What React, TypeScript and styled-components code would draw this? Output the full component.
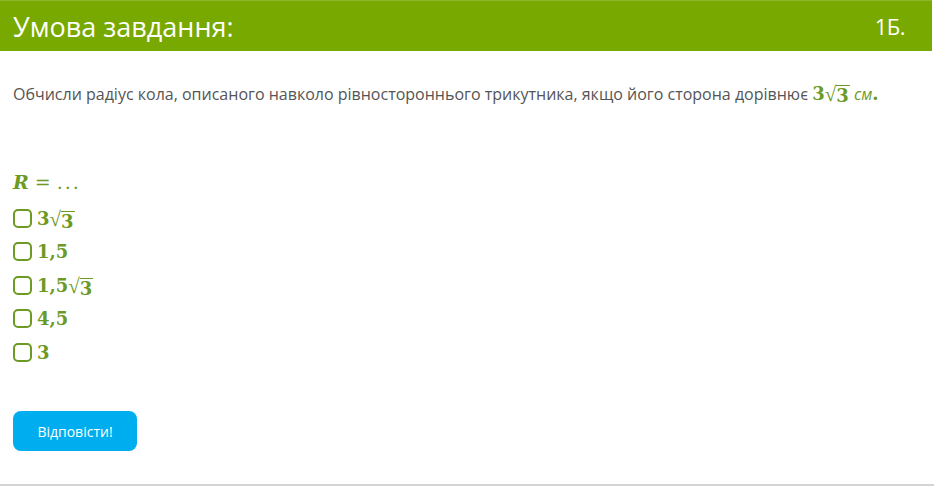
import React from 'react';
import styled, { createGlobalStyle } from 'styled-components';

const GlobalStyle = createGlobalStyle`
  html, body {
    margin: 0;
    padding: 0;
    background: #ffffff;
  }
  body {
    font-family: 'Open Sans', 'Noto Sans', sans-serif;
  }
`;

const Page = styled.div`
  width: 934px;
  height: 487px;
  display: flex;
  flex-direction: column;
  box-sizing: border-box;
`;

const Header = styled.div`
  height: 51px;
  margin-right: 2px;
  background: #78a900;
  border-top: 1px solid #8cb52a;
  box-sizing: border-box;
  display: flex;
  align-items: center;
  justify-content: space-between;
  padding: 0 27px 0 13px;
  color: #ffffff;
`;

const Title = styled.div`
  font-size: 27px;
  font-weight: 400;
  letter-spacing: 0;
`;

const Points = styled.div`
  font-size: 22px;
  letter-spacing: -0.5px;
`;

const Body = styled.div`
  flex: 1;
  padding: 30px 13px 0;
  display: flex;
  flex-direction: column;
  border-bottom: 2px solid #d4d4d4;
  margin-bottom: 1px;
`;

const Question = styled.p`
  margin: 0;
  font-size: 16px;
  color: #555555;
  line-height: 24px;
`;

const MathBold = styled.span`
  font-family: 'DejaVu Serif', 'Liberation Serif', serif;
  font-weight: 700;
  font-size: 18px;
  color: #6c9a24;
`;

const Unit = styled.span`
  font-style: italic;
  color: #6c9a24;
`;

const Radical = styled.span`
  display: inline-flex;
  align-items: flex-end;
`;

const RadicalSign = styled.span`
  font-family: 'Liberation Serif', serif;
  font-weight: 400;
  font-size: 21px;
  transform: translateY(1px);
`;

const Radicand = styled.span`
  border-top: 1.5px solid currentColor;
  line-height: 19px;
  padding-right: 1px;
`;

const Prompt = styled.div`
  margin-top: 64px;
  display: flex;
  align-items: baseline;
  gap: 6px;
  font-family: 'DejaVu Serif', 'Liberation Serif', serif;
  font-size: 19px;
  color: #6c9a24;
  line-height: 24px;
`;

const Italic = styled.span`
  font-style: italic;
  font-weight: 700;
`;

const Dots = styled.span`
  letter-spacing: 2px;
`;

const Options = styled.ul`
  list-style: none;
  margin: 12px 0 0;
  padding: 0;
  display: flex;
  flex-direction: column;
  gap: 9.5px;
`;

const Option = styled.li`
  display: flex;
  align-items: center;
  gap: 5px;
  height: 24px;
`;

const Box = styled.span`
  width: 15px;
  height: 15px;
  border: 2px solid #6c9a24;
  border-radius: 5px;
  flex-shrink: 0;
`;

const Button = styled.button`
  margin-top: 47px;
  align-self: flex-start;
  width: 124px;
  height: 40px;
  border: none;
  border-radius: 8px;
  background: #00aeef;
  color: #ffffff;
  font-family: 'Open Sans', 'Noto Sans', sans-serif;
  font-size: 14px;
  cursor: pointer;
`;

const Sqrt: React.FC<{ children: React.ReactNode }> = ({ children }) => (
  <Radical>
    <RadicalSign>√</RadicalSign>
    <Radicand>{children}</Radicand>
  </Radical>
);

const options: React.ReactNode[] = [
  <>3<Sqrt>3</Sqrt></>,
  <>1,5</>,
  <>1,5<Sqrt>3</Sqrt></>,
  <>4,5</>,
  <>3</>,
];

export default function App() {
  return (
    <>
      <GlobalStyle />
      <Page>
        <Header>
          <Title>Умова завдання:</Title>
          <Points>1Б.</Points>
        </Header>
        <Body>
          <Question>
            Обчисли радіус кола, описаного навколо рівностороннього трикутника, якщо його сторона дорівнює{' '}
            <MathBold>
              3<Sqrt>3</Sqrt>
            </MathBold>{' '}
            <Unit>см</Unit>
            <MathBold>.</MathBold>
          </Question>
          <Prompt>
            <Italic>R</Italic>
            <span>=</span>
            <Dots>...</Dots>
          </Prompt>
          <Options>
            {options.map((o, i) => (
              <Option key={i}>
                <Box />
                <MathBold>{o}</MathBold>
              </Option>
            ))}
          </Options>
          <Button type="button">Відповісти!</Button>
        </Body>
      </Page>
    </>
  );
}
